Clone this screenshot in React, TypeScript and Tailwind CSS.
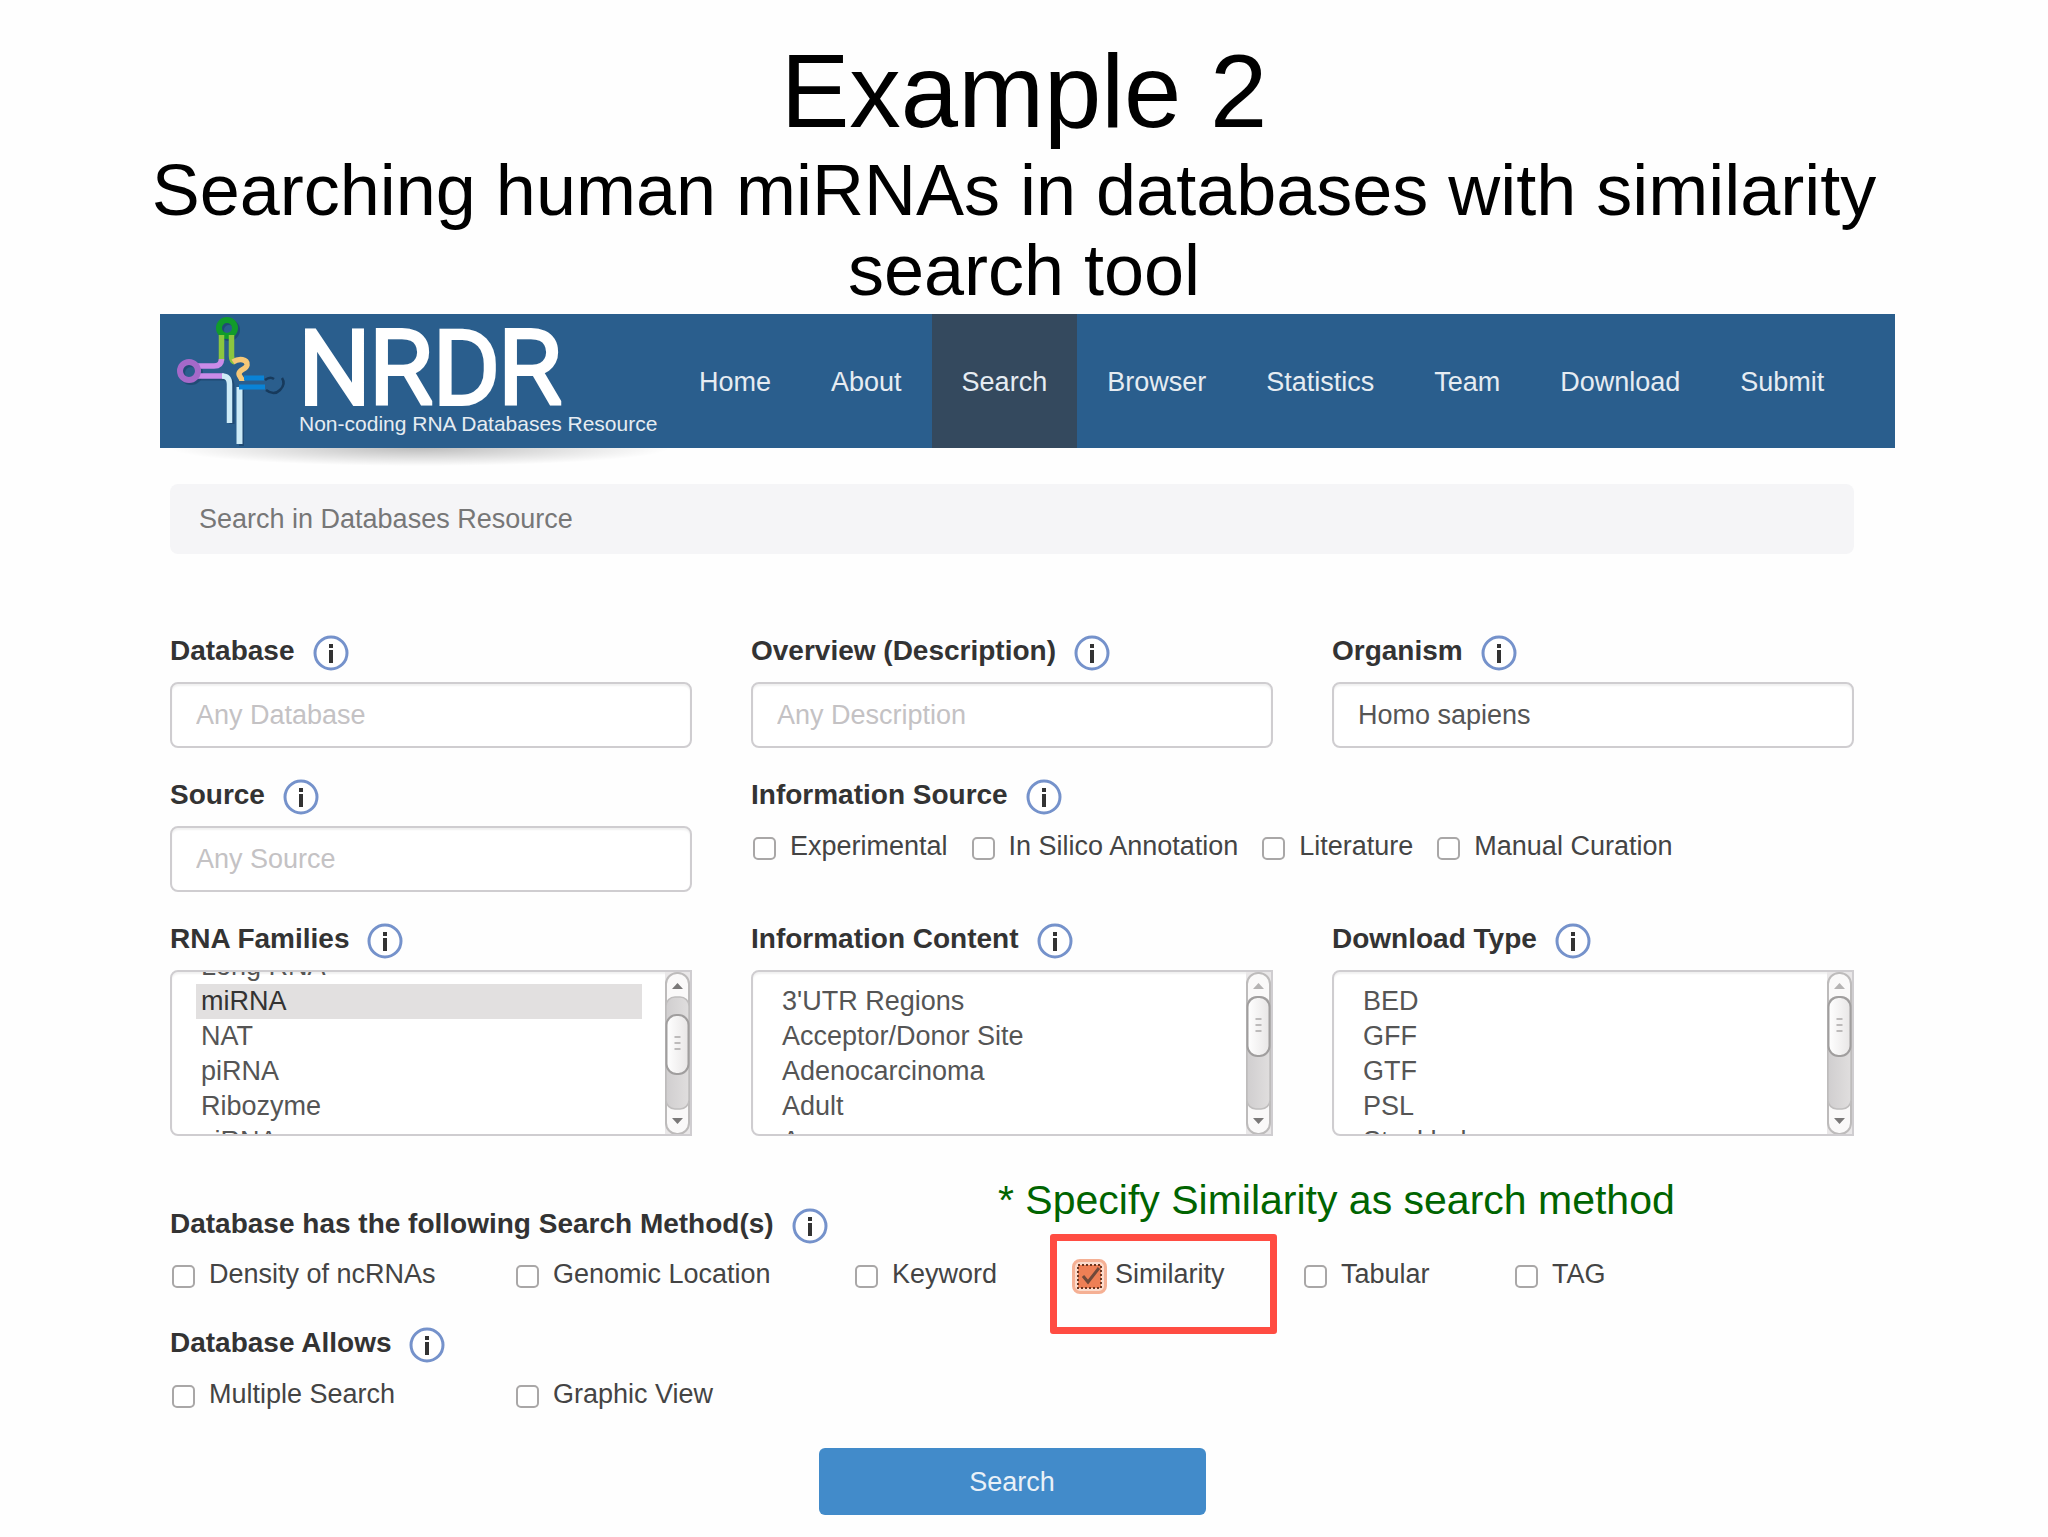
import { useEffect, useRef } from "react";
import { clsx } from "clsx";

const navItems = [
  { label: "Home" },
  { label: "About" },
  { label: "Search", active: true },
  { label: "Browser" },
  { label: "Statistics" },
  { label: "Team" },
  { label: "Download" },
  { label: "Submit" },
];

const infoSources = ["Experimental", "In Silico Annotation", "Literature", "Manual Curation"];

const rnaFamilies = ["Long RNA", "miRNA", "NAT", "piRNA", "Ribozyme", "siRNA", "snoRNA", "snRNA", "tRNA"];
const infoContent = ["3'UTR Regions", "Acceptor/Donor Site", "Adenocarcinoma", "Adult", "Aneurysm", "Disease"];
const downloadTypes = ["BED", "GFF", "GTF", "PSL", "Stockholm", "XML"];

function RnaLogo() {
  return (
    <svg className="h-[134px] w-[132px] shrink-0" viewBox="0 0 132 134" fill="none" aria-hidden="true">
      <g stroke="#1b3f66" strokeOpacity="0.6" transform="translate(2 2)">
        <circle cx="67" cy="14" r="8" strokeWidth="6" />
        <circle cx="29" cy="57" r="9" strokeWidth="6" />
        <path d="M70 108V70Q70 62 62 62H38M79.500 130V74" strokeWidth="5" />
      </g>
      <circle cx="67" cy="14" r="8" stroke="#119c2b" strokeWidth="6" />
      <path d="M61.500 21V47M71.500 21V42Q71.500 47 75 48" stroke="#8cc63f" strokeWidth="5.500" />
      <path d="M61.500 45Q61.500 52 54 52H38" stroke="#c98be8" strokeWidth="5.500" />
      <path d="M38 62H64" stroke="#c98be8" strokeWidth="5.500" />
      <circle cx="29" cy="57" r="9" stroke="#a569c9" strokeWidth="6" />
      <path d="M62 62Q69.500 62 69.500 70V109" stroke="#cdebf7" strokeWidth="5.500" />
      <path d="M79.500 73V130" stroke="#cdebf7" strokeWidth="6" />
      <path d="M73 48C79 44 88 45 87 51C86 56 79 55 79 60C79 63 82 63 82 67" stroke="#f7c877" strokeWidth="5.500" />
      <path d="M84 64H104M79 73H105" stroke="#0a83d6" strokeWidth="5" />
      <path d="M105 66Q110 62 114 65M122 64Q126 70 120 76Q114 82 106 76" stroke="#173a5c" strokeWidth="2.500" />
    </svg>
  );
}

function InfoIcon() {
  return (
    <svg className="mt-[3px] h-[36px] w-[36px]" viewBox="0 0 36 36" aria-hidden="true">
      <circle cx="18" cy="18" r="16" fill="#fff" stroke="#7592cb" strokeWidth="3" />
      <rect x="16" y="9" width="4" height="4" fill="#333" />
      <rect x="16" y="15" width="4" height="13" fill="#333" />
    </svg>
  );
}

function FieldLabel({ text, htmlFor }: { text: string; htmlFor?: string }) {
  return (
    <div className="flex h-[38px] items-center gap-[18px] text-[28px] font-bold text-[#333]">
      {htmlFor ? <label htmlFor={htmlFor}>{text}</label> : <span>{text}</span>}
      <InfoIcon />
    </div>
  );
}

function TextField({ id, label, placeholder, value }: { id: string; label: string; placeholder?: string; value?: string }) {
  return (
    <div>
      <FieldLabel text={label} htmlFor={id} />
      <input
        id={id}
        type="text"
        placeholder={placeholder}
        defaultValue={value}
        className="mt-3 h-[66px] w-full rounded-lg border-2 border-[#cfcdd0] bg-white px-6 text-[#555] shadow-[inset_0_2px_2px_rgba(0,0,0,0.06)] outline-none placeholder:text-[#c4c2c4]"
      />
    </div>
  );
}

function CheckField({ label }: { label: string }) {
  return (
    <label className="flex h-9 items-center gap-[14px] whitespace-nowrap pl-[2px] text-[#444]">
      <input
        type="checkbox"
        className="mt-1 h-[23px] w-[23px] shrink-0 appearance-none rounded-[5px] border-2 border-[#a9a7a7] bg-white"
      />
      {label}
    </label>
  );
}

// GTK-like scroll bar drawn over the hidden native one
function ScrollBar({ thumbTop, atStart }: { thumbTop: number; atStart?: boolean }) {
  return (
    <svg className="pointer-events-none absolute right-0 top-0 h-[166px] w-[27px]" viewBox="0 0 27 166" aria-hidden="true">
      <defs>
        <linearGradient id="thumb" x1="0" x2="1">
          <stop offset="0" stopColor="#fff" />
          <stop offset="1" stopColor="#e8e6e6" />
        </linearGradient>
        <linearGradient id="track" x1="0" x2="1">
          <stop offset="0" stopColor="#d0cecf" />
          <stop offset="1" stopColor="#e0dede" />
        </linearGradient>
      </defs>
      <rect x="0" y="0" width="27" height="166" fill="#e9e7e8" />
      <rect x="1" y="3" width="23" height="161" rx="11" fill="#faf9f9" stroke="#bdbbbb" strokeWidth="2" />
      <rect x="1" y="27" width="23" height="112" rx="9" fill="url(#track)" stroke="#bfbdbd" strokeWidth="1.500" />
      <path d="M12.500 13L18 19H7Z" fill={atStart ? "#b5b3b3" : "#7a7878"} />
      <path d="M12.500 154L18 148H7Z" fill="#7a7878" />
      <rect x="1.500" y={thumbTop} width="22" height="59" rx="10" fill="url(#thumb)" stroke="#a09e9e" strokeWidth="2" />
      <path
        d={`M9.500 ${thumbTop + 22}h6M9.500 ${thumbTop + 28}h6M9.500 ${thumbTop + 34}h6`}
        stroke="#aaa8a8"
        strokeWidth="1.500"
      />
      <path d="M0 1H26V165H0" fill="none" stroke="#cfcdd0" strokeWidth="2" />
    </svg>
  );
}

type ListFieldProps = {
  id: string;
  label: string;
  options: string[];
  selected?: string[];
  scrollTop?: number;
};

function ListField({ id, label, options, selected = [], scrollTop = 0 }: ListFieldProps) {
  const ref = useRef<HTMLSelectElement>(null);

  useEffect(() => {
    if (ref.current) ref.current.scrollTop = scrollTop;
  }, [scrollTop]);

  return (
    <div>
      <FieldLabel text={label} htmlFor={id} />
      <div className="relative mt-3">
        <select
          ref={ref}
          id={id}
          multiple
          size={4}
          defaultValue={selected}
          className="block h-[166px] w-full rounded-lg border-2 border-[#cfcdd0] bg-white pb-3 pl-6 pr-12 pt-3 text-[#555] shadow-[inset_0_2px_2px_rgba(0,0,0,0.06)] outline-none [scrollbar-width:none]"
        >
          {options.map((option) => (
            <option
              key={option}
              value={option}
              className="h-[35px] min-h-0 px-[5px] pb-0 pt-[2px] leading-[33px] checked:bg-[linear-gradient(#e2e0e0,#e2e0e0)] checked:text-[#333]"
            >
              {option}
            </option>
          ))}
        </select>
        <ScrollBar thumbTop={scrollTop > 0 ? 45 : 27} atStart={scrollTop === 0} />
      </div>
    </div>
  );
}

function SimilarityField() {
  return (
    <div className="relative">
      <label className="flex h-9 items-center gap-2 whitespace-nowrap text-[#444]">
        <span className="relative mt-1 h-[35px] w-[35px] shrink-0">
          <input
            type="checkbox"
            defaultChecked
            className="block h-[35px] w-[35px] appearance-none rounded-lg border-[3px] border-[#f5b094] bg-[#fbdccd]"
          />
          <svg className="pointer-events-none absolute inset-0" viewBox="0 0 35 35" fill="none" aria-hidden="true">
            <rect x="6" y="6" width="23" height="23" fill="#ee7f55" stroke="#6b3520" strokeWidth="2" strokeDasharray="2 2" />
            <path d="M11 17L16 23L27 9" stroke="#70493a" strokeWidth="3" />
          </svg>
        </span>
        Similarity
      </label>
      <p className="absolute -left-[74px] -top-[80px] whitespace-nowrap text-[41px] leading-[48px] text-[#006400]">
        * Specify Similarity as search method
      </p>
      <div className="pointer-events-none absolute -left-[22px] -top-[22px] h-[100px] w-[227px] rounded-[3px] border-[7px] border-[#ff4c42]" />
    </div>
  );
}

export default function App() {
  return (
    <div className="min-h-screen bg-[#fefefe] pb-5 font-['Liberation_Sans',Arial,sans-serif] text-[27px] leading-9">
      {/* Slide title */}
      <div className="pb-1 pt-[34px] text-center text-black">
        <h1 className="text-[103px] leading-[116px]">Example 2</h1>
        <h2 className="text-[72px] leading-[80px]">
          Searching human miRNAs in databases with similarity&nbsp;
          <br />
          search tool
        </h2>
      </div>

      <div className="pl-[160px] pr-[153px]">
        {/* Header */}
        <header className="relative flex h-[134px] bg-[#2a5e8d] text-[#e6ecf2]">
          <RnaLogo />
          <div className="w-[377px] shrink-0 pl-[7px]">
            <p className="h-[98px] whitespace-nowrap font-['Roboto',sans-serif] text-[100px] font-light leading-[110px] text-white [-webkit-text-stroke:6px_white] [stroke-linejoin:round]">
              NRDR
            </p>
            <p className="whitespace-nowrap text-[21px] leading-6">Non-coding RNA Databases Resource</p>
          </div>
          <nav>
            <ul className="flex h-full">
              {navItems.map((item) => (
                <li key={item.label}>
                  <a
                    href="#"
                    className={clsx("flex h-full items-center px-[30px] pt-[2px]", item.active && "bg-[#34495e]")}
                  >
                    {item.label}
                  </a>
                </li>
              ))}
            </ul>
          </nav>
          <div className="absolute left-[10px] top-full h-5 w-[500px] bg-[radial-gradient(50%_90%_at_50%_0,rgba(0,0,0,0.26),transparent)]" />
        </header>

        <main className="pl-[10px] pr-[41px]">
          <div className="mt-9 flex h-[70px] items-center rounded-lg bg-[#f5f5f7] px-[29px] text-[#777]">
            Search in Databases Resource
          </div>

          <form onSubmit={(e) => e.preventDefault()}>
            <div className="mt-[78px] grid grid-cols-3 gap-x-[59px] gap-y-7">
              <TextField id="database" label="Database" placeholder="Any Database" />
              <TextField id="overview" label="Overview (Description)" placeholder="Any Description" />
              <TextField id="organism" label="Organism" value="Homo sapiens" />

              <TextField id="source" label="Source" placeholder="Any Source" />
              <div className="col-span-2">
                <FieldLabel text="Information Source" />
                <div className="mt-[14px] flex gap-[22px]">
                  {infoSources.map((source) => (
                    <CheckField key={source} label={source} />
                  ))}
                </div>
              </div>

              <ListField id="families" label="RNA Families" options={rnaFamilies} selected={["miRNA"]} scrollTop={35} />
              <ListField id="content" label="Information Content" options={infoContent} />
              <ListField id="download" label="Download Type" options={downloadTypes} />
            </div>

            {/* Search methods */}
            <div className="mt-[69px]">
              <FieldLabel text="Database has the following Search Method(s)" />
              <div className="mt-[13px] grid grid-cols-[344fr_339fr_219fr_230fr_211fr_341fr]">
                <CheckField label="Density of ncRNAs" />
                <CheckField label="Genomic Location" />
                <CheckField label="Keyword" />
                <SimilarityField />
                <CheckField label="Tabular" />
                <CheckField label="TAG" />
              </div>
            </div>

            <div className="mt-8">
              <FieldLabel text="Database Allows" />
              <div className="mt-[14px] grid grid-cols-[344fr_339fr_219fr_230fr_211fr_341fr]">
                <CheckField label="Multiple Search" />
                <CheckField label="Graphic View" />
              </div>
            </div>

            <button
              type="submit"
              className="mx-auto mt-9 block h-[67px] w-[387px] rounded-md bg-[#428bca] text-[#e9f1f8]"
            >
              Search
            </button>
          </form>
        </main>
      </div>
    </div>
  );
}
